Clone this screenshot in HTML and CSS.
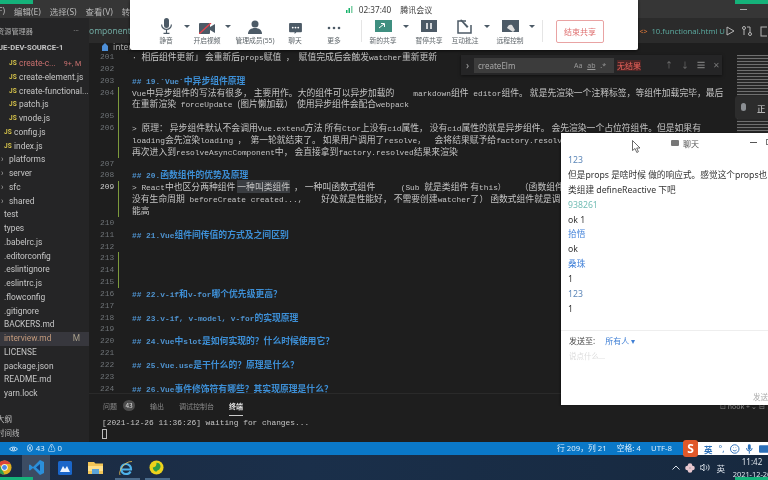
FILE: index.html
```html
<!DOCTYPE html>
<html lang="zh">
<head>
<meta charset="utf-8">
<title>interview.md</title>
<link rel="stylesheet" href="styles.css">
</head>
<body>
<div class="screen">
  <header class="menubar">
    <span class="menu">(F)</span><span class="menu">编辑(E)</span><span class="menu">选择(S)</span><span class="menu">查看(V)</span><span class="menu">转</span>
    <i class="dash"></i>
  </header>
  <div class="main">
    <aside class="side">
      <div class="side-head"><span>资源管理器</span><span>···</span></div>
      <div class="project">VUE-DEV-SOURCE-1</div>
      <div class="tree">
        <div class="f js red"><b>JS</b><span>create-c...</span><em>9+, M</em></div>
        <div class="f js"><b>JS</b><span>create-element.js</span></div>
        <div class="f js"><b>JS</b><span>create-functional...</span></div>
        <div class="f js"><b>JS</b><span>patch.js</span></div>
        <div class="f js"><b>JS</b><span>vnode.js</span></div>
        <div class="f js up"><b>JS</b><span>config.js</span></div>
        <div class="f js up"><b>JS</b><span>index.js</span></div>
        <div class="f dir"><i>›</i><span>platforms</span></div>
        <div class="f dir"><i>›</i><span>server</span></div>
        <div class="f dir"><i>›</i><span>sfc</span></div>
        <div class="f dir"><i>›</i><span>shared</span></div>
        <div class="f top"><span>test</span></div>
        <div class="f top"><span>types</span></div>
        <div class="f top"><span>.babelrc.js</span></div>
        <div class="f top"><span>.editorconfig</span></div>
        <div class="f top"><span>.eslintignore</span></div>
        <div class="f top"><span>.eslintrc.js</span></div>
        <div class="f top"><span>.flowconfig</span></div>
        <div class="f top"><span>.gitignore</span></div>
        <div class="f top"><span>BACKERS.md</span></div>
        <div class="f top sel"><span>interview.md</span><em>M</em></div>
        <div class="f top"><span>LICENSE</span></div>
        <div class="f top"><span>package.json</span></div>
        <div class="f top"><span>README.md</span></div>
        <div class="f top"><span>yarn.lock</span></div>
      </div>
      <div class="side-foot"><div>大纲</div><div>时间线</div></div>
    </aside>
    <section class="work">
      <div class="tabs">
        <span class="tab-a">omponent.h</span>
        <span class="tab-b"><i>&lt;&gt;</i> 10.functional.html U</span>
        <svg class="tab-ic" width="42" height="12" viewBox="0 0 42 12" fill="none" stroke="#b5b5b5"><path d="M2 2l7 4-7 4z"/><circle cx="19" cy="3" r="1.500"/><circle cx="25" cy="9" r="1.500"/><path d="M19 4.500V10M25 7.500V2h-3"/><rect x="36" y="2" width="8" height="9"/></svg>
      </div>
      <div class="crumb"><svg width="6" height="8" viewBox="0 0 6 8"><path d="M3 0l3 3v5H0V3z" fill="#4d8fd8"/></svg><span>inter</span></div>
      <div class="editor">
        <div class="row"><span class="no">201</span><span class="tx">· <span class="z">相后组件更新」 会重新后</span>props<span class="z">赋值</span> ， <span class="z">赋值完成后会触发</span>watcher<span class="z">重新更新</span></span></div>
        <div class="row"><span class="no">202</span></div>
        <div class="row"><span class="no">203</span><span class="tx h">## 19.`Vue`<span class="z">中异步组件原理</span></span></div>
        <div class="row g"><span class="no">204</span><span class="tx">Vue<span class="z">中异步组件的写法有很多， 主要用作。大的组件可以异步加载的</span>&nbsp;&nbsp;&nbsp;&nbsp;markdown<span class="z">组件</span> editor<span class="z">组件。  就是先渲染一个注释标签，等组件加载完毕，最后</span></span></div>
        <div class="row g"><span class="no"></span><span class="tx"><span class="z">在重新渲染</span> forceUpdate <span class="z">(图片懒加载）&nbsp; 使用异步组件会配合</span>webpack</span></div>
        <div class="row g"><span class="no">205</span></div>
        <div class="row g"><span class="no">206</span><span class="tx">&gt; <span class="z">原理： 异步组件默认不会调用</span>Vue.extend<span class="z">方法 所有</span>Ctor<span class="z">上没有</span>cid<span class="z">属性， 没有</span>cid<span class="z">属性的就是异步组件。 会先渲染一个占位符组件。但是如果有</span></span></div>
        <div class="row g"><span class="no"></span><span class="tx">loading<span class="z">会先渲染</span>loading ，&nbsp;<span class="z">第一轮就结束了。 如果用户调用了</span>resolve，&nbsp;&nbsp;<span class="z">会将结果赋予给</span>factory.resolved</span></div>
        <div class="row g"><span class="no"></span><span class="tx"><span class="z">再次进入到</span>resolveAsyncComponent<span class="z">中， 会直接拿到</span>factory.resolved<span class="z">结果来渲染</span></span></div>
        <div class="row"><span class="no">207</span></div>
        <div class="row"><span class="no">208</span><span class="tx h">## 20.<span class="z">函数组件的优势及原理</span></span></div>
        <div class="row g"><span class="no cur">209</span><span class="tx">&gt; React<span class="z">中也区分两种组件 <mark>一种叫类组件</mark>&nbsp; ， 一种叫函数式组件 </span>&nbsp;&nbsp;&nbsp;&nbsp; (Sub <span class="z">就是类组件 有</span>this）&nbsp;&nbsp; <span class="z">（函数组件</span></span></div>
        <div class="row g"><span class="no"></span><span class="tx"><span class="z">没有生命周期</span> beforeCreate created...,&nbsp;&nbsp;&nbsp; <span class="z">好处就是性能好， 不需要创建</span>watcher<span class="z">了） 函数式组件就是调</span></span></div>
        <div class="row g"><span class="no"></span><span class="tx"><span class="z">能高</span></span></div>
        <div class="row"><span class="no">210</span></div>
        <div class="row"><span class="no">211</span><span class="tx h">## 21.Vue<span class="z">组件间传值的方式及之间区别</span></span></div>
        <div class="row"><span class="no">212</span></div>
        <div class="row g"><span class="no">213</span></div>
        <div class="row g"><span class="no">214</span></div>
        <div class="row g"><span class="no">215</span></div>
        <div class="row"><span class="no">216</span><span class="tx h">## 22.v-if<span class="z">和</span>v-for<span class="z">哪个优先级更高？</span></span></div>
        <div class="row"><span class="no">217</span></div>
        <div class="row"><span class="no">218</span><span class="tx h">## 23.v-if, v-model, v-for<span class="z">的实现原理</span></span></div>
        <div class="row"><span class="no">219</span></div>
        <div class="row"><span class="no">220</span><span class="tx h">## 24.Vue<span class="z">中</span>slot<span class="z">是如何实现的？什么时候使用它？</span></span></div>
        <div class="row"><span class="no">221</span></div>
        <div class="row"><span class="no">222</span><span class="tx h">## 25.Vue.use<span class="z">是干什么的？原理是什么？</span></span></div>
        <div class="row"><span class="no">223</span></div>
        <div class="row"><span class="no">224</span><span class="tx h">## 26.Vue<span class="z">事件修饰符有哪些？其实现原理是什么？</span></span></div>
      </div>
      <div class="panel">
        <div class="ptabs">
          <span>问题</span><span class="badge">43</span><span class="gap">输出</span><span class="gap">调试控制台</span><span class="gap on">终端</span><span class="pact">⊡ hook + ⌄ ⊟</span>
        </div>
        <div class="term">[2021-12-26 11:36:26] waiting for changes...</div>
        <div class="term"><span class="caret"></span></div>
      </div>
    </section>
  </div>
  <footer class="status">
    <div class="st-l">
      <svg width="9" height="6" viewBox="0 0 9 6" fill="none" stroke="#cfe6f8"><path d="M.5 3C2 .5 7 .5 8.500 3 7 5.500 2 5.500.5 3z"/><circle cx="4.500" cy="3" r="1.200"/></svg>
      <span class="errs">⊗ 43 <span>⚠ 0</span></span>
    </div>
    <div class="st-r"><span>行 209，列 21</span><span>空格: 4</span><span>UTF-8</span></div>
  </footer>
  <nav class="taskbar">
    <div class="apps">
      <div class="app"><svg width="15" height="15" viewBox="0 0 16 16"><circle cx="8" cy="8" r="7.500" fill="#e0b020"/><path d="M8 .5A7.500 7.500 0 0 1 14.500 4.300H8A3.700 3.700 0 0 0 4.700 6.400L1.700 4A7.500 7.500 0 0 1 8 .5z" fill="#dc4437"/><path d="M1.700 4L5 9.500l3 6A7.500 7.500 0 0 1 1.700 4z" fill="#2f9e50"/><circle cx="8" cy="8" r="3.400" fill="#fff"/><circle cx="8" cy="8" r="2.600" fill="#4a87e8"/></svg></div>
      <div class="app act"><svg width="17" height="17" viewBox="0 0 17 17"><path d="M12 1L5 8 2 5.500 1 6v5l1 .5L5 9l7 7 4-2V3z" fill="#2b8fd9"/><path d="M12 5L8 8.500l4 3.500z" fill="#16407a"/></svg></div>
      <div class="app"><svg width="14" height="14" viewBox="0 0 14 14"><rect width="14" height="14" rx="1.500" fill="#1a66c9"/><path d="M2 11l3-6 2 3 2-3 3 6z" fill="#eaf3ff"/></svg></div>
      <div class="app"><svg width="15" height="13" viewBox="0 0 15 13"><path d="M0 1h6l1.500 1.500H15V13H0z" fill="#f2c556"/><rect x="0" y="5" width="15" height="5" fill="#ffe08a"/><rect x="4" y="8" width="7" height="5" fill="#5aa3d8"/></svg></div>
      <div class="app"><svg width="16" height="16" viewBox="0 0 16 16" fill="none"><path d="M3 9.500h10A5 5 0 1 0 8 14c2 0 3.700-1 4.500-2.600" stroke="#4eb2ea" stroke-width="2.200"/><path d="M2 15C0 12 6 1 14 1.500" stroke="#f1c24a" stroke-width=".8"/></svg></div>
      <div class="app"><svg width="15" height="15" viewBox="0 0 16 16"><circle cx="8" cy="8" r="7.500" fill="#ecd31c"/><path d="M8 3a4 4 0 0 1 3 7c-1 1-3 .7-3 2.500A5 5 0 0 1 4 8c3 0 4-2 4-5z" fill="#2f9d46"/></svg></div>
    </div>
    <div class="tray">
      <svg width="8" height="5" viewBox="0 0 8 5" fill="none" stroke="#d8dfe8"><path d="M.5 4.500L4 1l3.500 3.500"/></svg>
      <svg width="10" height="10" viewBox="0 0 10 10"><g fill="#e7c7cf"><circle cx="5" cy="2.500" r="2.300"/><circle cx="2.500" cy="5" r="2.300"/><circle cx="7.500" cy="5" r="2.300"/><circle cx="5" cy="7.500" r="2.300"/></g></svg>
      <svg width="10" height="9" viewBox="0 0 10 9" fill="none" stroke="#cfd6df"><path d="M0 3h2l2-2v7L2 6H0z"/><path d="M6 2.500c1 1 1 3 0 4M8 1.500c1.500 1.500 1.500 4.500 0 6"/></svg>
      <span class="ime">英</span>
      <div class="clock"><div>11:42</div><div>2021-12-26</div></div>
    </div>
  </nav>

  <div class="win meeting">
    <div class="m-top"><svg width="7" height="7" viewBox="0 0 7 7"><g fill="#17b26a"><rect y="4" width="1.500" height="3"/><rect x="2.500" y="2" width="1.500" height="5"/><rect x="5" width="1.500" height="7" fill="#7fcfa6"/></g></svg><span class="m-time">02:37:40</span><span>腾讯会议</span></div>
    <div class="m-bar">
      <div class="m-it"><svg width="11" height="16" viewBox="0 0 11 16"><rect x="3" y="0" width="5" height="10" rx="2.500" fill="#4c5a66"/><path d="M.6 6.500a4.900 4.900 0 0 0 9.800 0M5.500 12v3M2.500 15.400h6" fill="none" stroke="#4c5a66" stroke-width="1.200"/></svg><span>静音</span></div>
      <i class="caret-d c1"></i>
      <div class="m-it i2"><svg width="16" height="11" viewBox="0 0 16 11"><rect y="0" width="11" height="11" rx="1" fill="#4c5a66"/><path d="M11 4l5-3v9l-5-3z" fill="#4c5a66"/><path d="M0 11L12 0" stroke="#e5424d" stroke-width="1.300"/></svg><span>开启视频</span></div>
      <i class="caret-d c1"></i>
      <div class="m-it wide i3"><svg width="16" height="14" viewBox="0 0 16 14"><circle cx="8" cy="4" r="3.500" fill="#4c5a66"/><path d="M1 14c0-4 3-6 7-6s7 2 7 6z" fill="#4c5a66"/></svg><span>管理成员(55)</span></div>
      <div class="m-it i4"><svg width="13" height="11" viewBox="0 0 14 12"><path d="M0 1a1 1 0 0 1 1-1h12a1 1 0 0 1 1 1v8a1 1 0 0 1-1 1H8l-2 2v-2H1a1 1 0 0 1-1-1z" fill="#4c5a66"/><g fill="#fff"><circle cx="4" cy="5" r="1"/><circle cx="7" cy="5" r="1"/><circle cx="10" cy="5" r="1"/></g></svg><span>聊天</span></div>
      <div class="m-it i5"><svg width="14" height="11" viewBox="0 0 14 11"><g fill="#4c5a66"><circle cx="2" cy="5" r="1.300"/><circle cx="7" cy="5" r="1.300"/><circle cx="12" cy="5" r="1.300"/></g></svg><span>更多</span></div>
      <i class="div"></i>
      <div class="m-it i6"><svg width="17" height="14" viewBox="0 0 17 14"><rect width="17" height="12" fill="#3f8f80"/><path d="M4 8l5-4M6 3.500h3.500V7" stroke="#fff" fill="none"/></svg><span>新的共享</span></div>
      <i class="caret-d c2"></i>
      <div class="m-it i7"><svg width="16" height="14" viewBox="0 0 16 14"><rect width="16" height="12" fill="#4c5a66"/><path d="M6 3v6M10 3v6" stroke="#fff" stroke-width="1.500"/></svg><span>暂停共享</span></div>
      <div class="m-it i8"><svg width="16" height="15" viewBox="0 0 16 15" fill="none"><path d="M9 2H1v12h13V6" stroke="#4c5a66" stroke-width="1.500"/><path d="M3 1l7 8 1.500-1.500-7-7z" fill="#4c5a66"/></svg><span>互动批注</span></div>
      <i class="caret-d c3"></i>
      <div class="m-it i9"><svg width="17" height="14" viewBox="0 0 17 14"><rect width="17" height="12" fill="#4c5a66"/><path d="M5 8c1-3 3-4 5-3l3 5-2 2z" fill="#ddd"/></svg><span>远程控制</span></div>
      <i class="caret-d c3"></i>
      <i class="div dv2"></i>
      <button class="end">结束共享</button>
    </div>
  </div>

  <div class="mini"></div>
  <div class="pill"><svg width="5" height="10" viewBox="0 0 5 10"><rect width="5" height="8" rx="2.500" fill="#8b8f93"/></svg><span>正</span></div>

  <div class="find">
    <span class="chev">›</span>
    <div class="find-in"><span>createElm</span><span class="opts">Aa <u>ab</u> .*</span></div>
    <span class="nores">无结果</span>
    <span class="find-btn">↑ ↓ ☰ ✕</span>
  </div>

  <div class="win chat">
    <div class="chat-title"><svg width="8" height="6" viewBox="0 0 8 6"><rect width="8" height="6" rx="1" fill="#777"/></svg><span>聊天</span><i class="mini-btn"></i><i class="max-btn"></i></div>
    <div class="msgs">
      <p class="n blue">123</p>
      <p>但是props 是啥时候 做的响应式。感觉这个props也</p>
      <p>类组建 defineReactive 下吧</p>
      <p class="n teal">938261</p>
      <p>ok 1</p>
      <p class="n bl2">拾悟</p>
      <p>ok</p>
      <p class="n bl2">桑珠</p>
      <p>1</p>
      <p class="n blue">123</p>
      <p>1</p>
    </div>
    <div class="send"><span>发送至:</span><span class="all">所有人 ▾</span></div>
    <div class="ph">说点什么...</div>
    <div class="send-b">发送</div>
  </div>
  <svg class="cursor" width="9" height="13" viewBox="0 0 9 13"><path d="M.5.500v10l2.500-2 1.800 4 1.600-.8L4.700 8H8z" fill="#fff" stroke="#444" stroke-width=".8"/></svg>

  <div class="imebar">
    <span class="slogo">S</span><span class="en">英</span><span>°,</span>
    <svg width="10" height="10" viewBox="0 0 10 10" fill="none" stroke="#2b6fb8"><circle cx="5" cy="5" r="4.500"/><path d="M3 6c1 1.300 3 1.300 4 0M3.500 3.500h.5M6 3.500h.5"/></svg>
    <svg width="7" height="10" viewBox="0 0 7 10"><rect x="2" width="3" height="6" rx="1.500" fill="#2b6fb8"/><path d="M.5 4a3 3 0 0 0 6 0M3.500 7v3" stroke="#2b6fb8" fill="none"/></svg>
    <svg width="10" height="8" viewBox="0 0 10 8"><rect width="10" height="8" rx="1" fill="#2b6fb8"/></svg>
  </div>
  <i class="strip s1"></i><i class="strip s2"></i><i class="strip s3"></i><i class="strip s4"></i><i class="thumb t1"></i><i class="thumb t2"></i>
</div>
</body>
</html>
```
FILE: styles.css
```css
* { box-sizing: border-box; }
html, body { margin: 0; padding: 0; background: #1e1e1e; }
.screen {
  position: relative;
  width: 768px;
  height: 480px;
  overflow: hidden;
  display: flex;
  flex-direction: column;
  font-family: "Noto Sans", "Noto Sans CJK SC", sans-serif;
  color: #c5c5c5;
  filter: blur(0.5px);
}
.menubar {
  flex: 0 0 18px;
  background: #363636;
  display: flex;
  align-items: center;
  gap: 9px;
  padding: 3px 0 0 0;
  font-size: 8.500px;
  color: #b8b8b8;
  position: relative;
}
.menu:first-child { width: 5px; overflow: hidden; direction: rtl; }
.dash { position: absolute; left: 740px; top: 9px; width: 7px; height: 1px; background: #aaa; }
.main { flex: 1; display: flex; min-height: 0; }

/* sidebar */
.side {
  flex: 0 0 89px;
  width: 89px;
  min-width: 0;
  overflow: hidden;
  background: #252526;
  display: flex;
  flex-direction: column;
  font-family: Roboto, "Noto Sans CJK SC", sans-serif;
  font-size: 8.400px;
  color: #c6c6c6;
}
.side-head {
  height: 23px;
  padding: 2px 10px 0 0;
  display: flex;
  justify-content: space-between;
  align-items: center;
  font-size: 7.200px;
  color: #a9a9a9;
  margin-left: -3px;
}
.project {
  height: 13px;
  font-size: 7.600px;
  font-weight: 700;
  line-height: 13px;
  color: #c4c4c4;
  margin-left: -7px;
  margin-bottom: 3px;
  white-space: nowrap;
}
.tree { display: flex; flex-direction: column; }
.f {
  position: relative;
  height: 13.750px;
  line-height: 13.750px;
  display: flex;
  white-space: nowrap;
  overflow: hidden;
}
.f b { color: #d6c24a; font-size: 6.500px; font-weight: 700; width: 10px; flex: none; }
.js { padding-left: 9px; }
.js.up { padding-left: 4px; }
.js.up b { width: 10px; }
.f.red span { color: #c9706f; }
.f.red em { color: #c9706f; font-style: normal; margin-left: 8px; font-size: 7.200px; }
.dir i { width: 9px; padding-left: 1px; font-style: normal; color: #aaa; flex: none; }
.top { padding-left: 4px; }
.sel { background: #37373d; color: #c39a7c; justify-content: space-between; padding-right: 9px; }
.sel em { font-style: normal; color: #a89f8b; }
.side-foot { margin-top: auto; font-size: 7.500px; line-height: 14px; padding-bottom: 1px; color: #bdbdbd; margin-left: -3px; }

/* work area */
.work { flex: 1; display: flex; flex-direction: column; min-width: 0; background: #1e1e1e; }
.tabs {
  flex: 0 0 25px;
  background: #2b2b2b;
  display: flex;
  align-items: center;
  font-size: 8.500px;
  color: #6fa79f;
  position: relative;
}
.tab-b { margin-left: auto; margin-right: 43px; color: #5aa69c; font-size: 7.700px; white-space: nowrap; }
.tab-b i { color: #d9763a; font-style: normal; font-size: 7px; margin-right: 2px; }
.tab-ic { position: absolute; right: 1px; top: 7px; overflow: hidden; }
.crumb {
  flex: 0 0 8px;
  display: flex;
  gap: 5px;
  align-items: center;
  padding-left: 13px;
  font-size: 8.500px;
  color: #a9a9a9;
  line-height: 8px;
}
.editor {
  flex: 0 0 343px;
  font-family: "Liberation Mono", "Noto Sans CJK SC", monospace;
  font-size: 7.850px;
  color: #c4c4c4;
  overflow: hidden;
  border-bottom: 1px solid #2a2a2a;
}
.row { display: flex; height: 11.850px; line-height: 11.850px; white-space: nowrap; position: relative; }
.row.g::before {
  content: "";
  position: absolute;
  left: 29px;
  top: 0;
  width: 1px;
  height: 100%;
  background: #7c9a3c;
}
.no { flex: 0 0 27px; padding-left: 11px; color: #6e7377; font-size: 7.850px; }
.no.cur { color: #cfcfcf; }
.tx { margin-left: 16px; font-weight: 400; }
.z { font-family: "Noto Sans CJK SC", sans-serif; font-size: 8.800px; }
.h { color: #4f93cf; font-weight: 700; }
.h .z { color: #3d8fd6; }
mark { background: #3a3d41; color: inherit; }
.panel { flex: 1; font-family: "Liberation Mono", monospace; }
.ptabs {
  height: 23px;
  padding: 0 0 0 14px;
  display: flex;
  align-items: center;
  font-family: "Noto Sans CJK SC", sans-serif;
  font-size: 7px;
  color: #8a8a8a;
}
.badge { background: #4d4d4d; color: #ddd; border-radius: 50%; width: 12px; height: 11px; line-height: 11px; text-align: center; margin-left: 6px; font-size: 6.500px; }
.gap { margin-left: 15px; }
.on { color: #e0e0e0; position: relative; font-weight: 700; }
.on::after { content: ""; position: absolute; left: 0; right: 0; bottom: -5px; height: 1px; background: #ccc; }
.pact { margin-left: auto; padding-right: 3px; white-space: nowrap; color: #8a8a8a; }
.term { font-size: 7.850px; line-height: 11px; padding-left: 13px; color: #c4c4c4; white-space: nowrap; }
.caret { display: inline-block; width: 5px; height: 10px; border: 1px solid #bbb; vertical-align: middle; }

/* status */
.status {
  flex: 0 0 13px;
  background: #0a78c8;
  color: #d8ecfb;
  font-size: 7.800px;
  line-height: 13px;
  display: flex;
  justify-content: space-between;
  padding-left: 9px;
}
.st-l { display: flex; align-items: center; gap: 8px; }
.errs span { margin-left: 1px; }
.st-r { display: flex; gap: 10px; margin-right: 96px; }

/* taskbar */
.taskbar {
  flex: 0 0 25px;
  background: linear-gradient(90deg, #1c2b42, #1a2f4a 40%, #17293f);
  display: flex;
  justify-content: space-between;
}
.apps { display: flex; }
.app { width: 30.500px; height: 25px; display: flex; align-items: center; justify-content: center; }
.app:first-child { width: 25px; justify-content: flex-start; margin-left: -3px; }
.act { background: #3c4c63; width: 28px; }
.tray { display: flex; align-items: center; gap: 5px; color: #dde3ea; font-size: 8.500px; margin-right: -9px; }
.ime { margin-left: 1px; }
.clock { width: 50px; margin-left: -3px; line-height: 12px; font-size: 7.400px; white-space: nowrap; text-align: center; padding-top: 1px; }
.clock div:first-child { font-size: 8px; }

/* meeting window */
.win { position: absolute; background: #fff; }
.meeting {
  left: 130px;
  top: 0;
  width: 508px;
  height: 50px;
  box-shadow: 0 1px 3px rgba(0, 0, 0, .6);
  color: #444;
  display: flex;
  flex-direction: column;
  border-radius: 0 0 2px 2px;
}
.m-top {
  height: 17px;
  display: flex;
  align-items: center;
  justify-content: center;
  gap: 6px;
  font-size: 8px;
  color: #3c3c3c;
  padding: 1px 0 0 10px;
}
.m-time { margin-right: 3px; font-size: 8.200px; }
.m-bar { display: flex; align-items: flex-start; padding-left: 21px; height: 33px; }
.m-it { flex: none; width: 30px; display: flex; flex-direction: column; align-items: center; gap: 1px; height: 28px; font-size: 6.800px; color: #5d6469; white-space: nowrap; justify-content: flex-end; }
.m-it svg { flex: none; }
.wide { width: 42px; }
.i2 { margin-left: 2px; }
.i3 { margin-left: 3px; }
.i4 { margin-left: 4px; }
.i5 { margin-left: 9px; }
.i6 { margin-left: 6px; }
.i7 { margin-left: 5px; }
.i8 { margin-left: 6px; }
.i9 { margin-left: 5px; }
.caret-d { width: 0; height: 0; border: 3px solid transparent; border-top: 3px solid #4c5a66; border-bottom: 0; margin-top: 8px; flex: none; }
.c1 { margin-left: 3px; }
.c2 { margin-left: 5px; }
.c3 { margin-left: 4px; }
.div { width: 1px; height: 22px; background: #e5e5e5; margin: 3px 0 0 12px; flex: none; }
.dv2 { margin-left: 7px; }
.end {
  flex: none;
  width: 48px;
  height: 23px;
  margin: 3px 0 0 13px;
  background: #fff;
  border: 1px solid #e9a3a3;
  border-radius: 2px;
  color: #df6f6f;
  font: 8px "Noto Sans CJK SC", sans-serif;
  padding: 0;
}

/* overlays */
.pill {
  position: absolute;
  left: 735px;
  top: 96px;
  width: 33px;
  height: 23px;
  background: #2c2c2c;
  border-radius: 3px 0 0 3px;
  display: flex;
  align-items: center;
  gap: 11px;
  padding-left: 6px;
  font-size: 8.500px;
  color: #ddd;
}
.mini {
  position: absolute;
  left: 737px;
  top: 55px;
  width: 31px;
  height: 78px;
  background: repeating-linear-gradient(#8a8a8a 0 1px, #2a2a2a 1px 3px);
  opacity: .75;
}
.find {
  position: absolute;
  left: 461px;
  top: 55px;
  width: 261px;
  height: 20px;
  background: #252526;
  box-shadow: 0 1px 3px rgba(0, 0, 0, .5);
  display: flex;
  align-items: center;
  font-size: 8px;
  color: #a4a4a4;
}
.chev { width: 13px; text-align: center; font-size: 10px; }
.find-in {
  width: 140px;
  height: 15px;
  background: #3c3c3c;
  display: flex;
  justify-content: space-between;
  align-items: center;
  padding: 0 8px 0 4px;
  color: #a8a8a8;
}
.opts { font-size: 7px; color: #999; word-spacing: 3px; }
.nores { color: #f0645c; background: #4a2525; margin-left: 3px; font-size: 8px; line-height: 11px; }
.find-btn { margin-left: 24px; font-size: 8px; word-spacing: 6px; white-space: nowrap; color: #777; }
.chat {
  left: 561px;
  top: 133px;
  width: 207px;
  height: 272px;
  color: #333;
  display: flex;
  flex-direction: column;
  font-size: 8.700px;
  box-shadow: -1px 0 2px rgba(0, 0, 0, .4);
}
.chat-title {
  height: 20px;
  display: flex;
  align-items: center;
  gap: 4px;
  padding-left: 110px;
  font-size: 8px;
  color: #555;
  position: relative;
}
.mini-btn { position: absolute; left: 189px; top: 9px; width: 7px; height: 1px; background: #555; }
.max-btn { position: absolute; left: 205px; top: 6px; width: 4px; height: 6px; border: 1px solid #777; }
.msgs { height: 178px; padding: 0 0 0 7px; border-bottom: 1px solid #eee; white-space: nowrap; overflow: hidden; }
.msgs p { margin: 0; height: 14.900px; line-height: 14.900px; }
.blue { color: #5d87b8; }
.bl2 { color: #3e7fd8; }
.teal { color: #73bdb5; }
.send { display: flex; gap: 10px; padding: 4px 0 0 8px; font-size: 8px; color: #444; line-height: 11px; }
.all { color: #3f7fd5; }
.ph { padding: 4px 0 0 8px; font-size: 7.500px; color: #dcdcdc; }
.send-b { margin-top: auto; text-align: right; padding: 0 0 3px 0; font-size: 7.500px; color: #aaa; }
.cursor { position: absolute; left: 632px; top: 140px; }
.imebar {
  position: absolute;
  left: 683px;
  top: 442px;
  width: 85px;
  height: 13px;
  background: #fff;
  display: flex;
  align-items: center;
  gap: 6px;
  font-size: 8.500px;
  color: #2b6fb8;
}
.slogo {
  flex: none;
  width: 15px;
  height: 17px;
  background: #e0582a;
  color: #fff;
  text-align: center;
  font-weight: 700;
  line-height: 17px;
  font-size: 12px;
  border-radius: 3px;
}
.en { font-weight: 700; }
.strip { position: absolute; background: #15b27a; }
.s1 { left: 0; top: 0; width: 33px; height: 4px; }
.s2 { left: 735px; top: 0; width: 33px; height: 4px; }
.s3 { left: 0; top: 477px; width: 33px; height: 3px; }
.s4 { left: 735px; top: 477px; width: 33px; height: 3px; }
.thumb { position: absolute; top: 478px; height: 2px; width: 25px; background: #4a6a8a; }
.t1 { left: 115px; }
.t2 { left: 145px; }
```
